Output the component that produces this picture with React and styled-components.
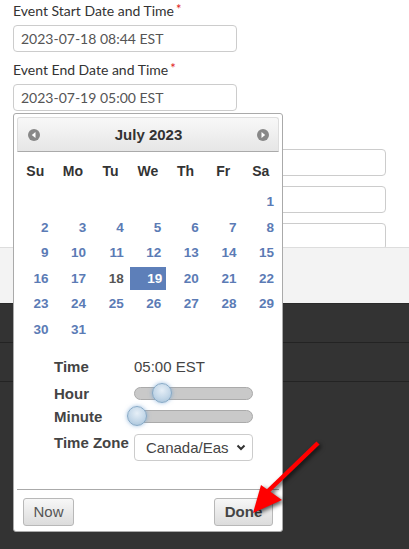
import React from "react";
import styled, { createGlobalStyle } from "styled-components";

const Global = createGlobalStyle`
  html, body { margin: 0; padding: 0; background: #333; }
  body { width: 409px; height: 549px; overflow: hidden; font-family: "Liberation Sans", Arial, sans-serif; }
`;

const Page = styled.div`
  position: relative;
  width: 409px;
  height: 549px;
  background: #333;
`;

const FormArea = styled.div`
  height: 247px;
  background: #fff;
  overflow: hidden;
  display: flex;
  gap: 14px;
  padding-left: 13px;
  box-sizing: border-box;
`;

const LeftCol = styled.div`
  width: 224px;
  display: flex;
  flex-direction: column;
`;

const RightCol = styled.div`
  width: 135px;
  padding-top: 149px;
  display: flex;
  flex-direction: column;
  gap: 10px;
`;

const Field = styled.div`
  margin-top: ${(p) => p.$mt}px;
  display: flex;
  flex-direction: column;
`;

const Label = styled.div`
  font-family: Lato, "Liberation Sans", sans-serif;
  font-size: 14px;
  line-height: 20px;
  color: #333;
  margin-bottom: 4px;
  white-space: nowrap;
`;

const Req = styled.span`
  color: #e02020;
  font-size: 13px;
  margin-left: 2px;
  position: relative;
  top: -2px;
`;

const TextInput = styled.div`
  height: 27px;
  flex: none;
  box-sizing: border-box;
  border: 1px solid #ccc;
  border-radius: 4px;
  padding: 0 7px;
  display: flex;
  align-items: center;
  font-family: Lato, "Liberation Sans", sans-serif;
  font-size: 14px;
  color: #555;
  background: #fff;
`;

const Band = styled.div`
  height: 57px;
  background: #f3f3f3;
  border-top: 1px solid #ddd;
  border-bottom: 1px solid #2a2a2a;
  box-sizing: border-box;
`;

const DarkRow = styled.div`
  height: 39px;
  border-bottom: 1px solid #232323;
  box-sizing: border-box;
  background: #333;
`;

const Popup = styled.div`
  position: absolute;
  left: 13px;
  top: 113px;
  width: 270px;
  box-sizing: border-box;
  background: #fff;
  border: 1px solid #aaa;
  border-radius: 3px;
  padding: 3px 3px 5px;
  font-family: "Liberation Sans", Arial, sans-serif;
`;

const Header = styled.div`
  height: 35px;
  box-sizing: border-box;
  border: 1px solid #ddd;
  border-bottom-color: #aaa;
  border-radius: 3px 3px 0 0;
  background: linear-gradient(#f8f8f8, #e6e6e6);
  display: flex;
  align-items: center;
  justify-content: space-between;
  padding: 0 9px 0 10px;
`;

const Title = styled.div`
  font-weight: bold;
  font-size: 15px;
  color: #333;
`;

const NavIcon = ({ dir }) => (
  <svg width="12" height="12" viewBox="0 0 12 12">
    <circle cx="6" cy="6" r="6" fill="#888" />
    {dir === "prev" ? (
      <polygon points="7.5,3 3.8,6 7.5,9" fill="#fff" />
    ) : (
      <polygon points="4.5,3 8.2,6 4.5,9" fill="#fff" />
    )}
  </svg>
);

const Weekdays = styled.div`
  margin-top: 6px;
  height: 26px;
  display: grid;
  grid-template-columns: repeat(7, 1fr);
  column-gap: 1px;
  align-items: center;
`;

const Weekday = styled.div`
  text-align: center;
  font-weight: bold;
  font-size: 14px;
  color: #333;
`;

const Days = styled.div`
  margin-top: 6px;
  display: grid;
  grid-template-columns: repeat(7, 1fr);
  grid-auto-rows: 23px;
  column-gap: 1px;
  row-gap: 2.5px;
`;

const Day = styled.div`
  display: flex;
  align-items: center;
  justify-content: flex-end;
  padding-right: ${(p) => (p.$sel ? 4 : 5)}px;
  font-weight: bold;
  font-size: 13.5px;
  color: ${(p) => (p.$sel ? "#fff" : p.$today ? "#555" : "#5b7bb5")};
  background: ${(p) => (p.$sel ? "#5d7fb9" : "transparent")};
`;

const TimeBlock = styled.div`
  margin-left: 37px;
  width: 199px;
  display: flex;
  flex-direction: column;
`;

const TRow = styled.div`
  margin-top: ${(p) => p.$mt}px;
  height: ${(p) => p.$h}px;
  display: flex;
  align-items: ${(p) => (p.$top ? "flex-start" : "center")};
`;

const TLabel = styled.div`
  width: 80px;
  flex: none;
  font-weight: bold;
  font-size: 15px;
  line-height: 18px;
  color: #444;
  white-space: nowrap;
`;

const TValue = styled.div`
  font-size: 15px;
  color: #444;
`;

const Track = styled.div`
  position: relative;
  width: 119px;
  height: 13px;
  box-sizing: border-box;
  background: #c9c9c9;
  border: 1px solid #aaa;
  border-radius: 7px;
`;

const Thumb = styled.div`
  position: absolute;
  top: -5px;
  width: 20px;
  height: 20px;
  box-sizing: border-box;
  border-radius: 50%;
  border: 1px solid #86a9c6;
  background: radial-gradient(circle at 50% 35%, #e6eff7 0%, #c3d7e8 55%, #9fbdd6 100%);
  box-shadow: 0 0 4px rgba(110, 160, 210, 0.7);
`;

const Select = styled.div`
  width: 119px;
  height: 27px;
  box-sizing: border-box;
  border: 1px solid #ccc;
  border-radius: 4px;
  display: flex;
  align-items: center;
  justify-content: space-between;
  padding: 0 6px 0 11px;
  font-size: 15px;
  color: #444;
`;

const SelectText = styled.span`
  white-space: nowrap;
`;

const Footer = styled.div`
  margin-top: 28px;
  border-top: 1px solid #aaa;
  padding: 8px 6px 0;
  display: flex;
  justify-content: space-between;
`;

const Button = styled.div`
  height: 28px;
  box-sizing: border-box;
  width: ${(p) => p.$w}px;
  display: flex;
  align-items: center;
  justify-content: center;
  border: 1px solid #b8b8b8;
  border-radius: 3px;
  background: linear-gradient(#f7f7f7, #dcdcdc);
  font-size: 15px;
  font-weight: ${(p) => (p.$bold ? "bold" : "normal")};
  color: ${(p) => (p.$bold ? "#444" : "#555")};
`;

const Arrow = styled.svg`
  position: absolute;
  left: 240px;
  top: 430px;
  overflow: visible;
  filter: drop-shadow(2px 2px 2px rgba(0, 0, 0, 0.65));
`;

const weekdays = ["Su", "Mo", "Tu", "We", "Th", "Fr", "Sa"];

export default function App() {
  const cells = [];
  for (let i = 0; i < 6; i++) cells.push(null);
  for (let d = 1; d <= 31; d++) cells.push(d);

  return (
    <Page>
      <Global />
      <FormArea>
        <LeftCol>
          <Field $mt={1}>
            <Label>
              Event Start Date and Time<Req>*</Req>
            </Label>
            <TextInput>2023-07-18 08:44 EST</TextInput>
          </Field>
          <Field $mt={8}>
            <Label>
              Event End Date and Time<Req>*</Req>
            </Label>
            <TextInput>2023-07-19 05:00 EST</TextInput>
          </Field>
        </LeftCol>
        <RightCol>
          <TextInput />
          <TextInput />
          <TextInput />
        </RightCol>
      </FormArea>
      <Band />
      <DarkRow />
      <DarkRow />

      <Popup>
        <Header>
          <NavIcon dir="prev" />
          <Title>July 2023</Title>
          <NavIcon dir="next" />
        </Header>
        <Weekdays>
          {weekdays.map((w) => (
            <Weekday key={w}>{w}</Weekday>
          ))}
        </Weekdays>
        <Days>
          {cells.map((d, i) => (
            <Day key={i} $sel={d === 19} $today={d === 18}>
              {d}
            </Day>
          ))}
        </Days>
        <TimeBlock>
          <TRow $mt={16} $h={20}>
            <TLabel>Time</TLabel>
            <TValue>05:00 EST</TValue>
          </TRow>
          <TRow $mt={7} $h={20}>
            <TLabel>Hour</TLabel>
            <Track>
              <Thumb style={{ left: 17 }} />
            </Track>
          </TRow>
          <TRow $mt={3} $h={20}>
            <TLabel>Minute</TLabel>
            <Track>
              <Thumb style={{ left: -8 }} />
            </Track>
          </TRow>
          <TRow $mt={7} $h={27} $top>
            <TLabel>Time Zone</TLabel>
            <Select>
              <SelectText>Canada/Eas</SelectText>
              <svg width="10" height="10" viewBox="0 0 10 10">
                <polyline points="1.5,3.5 5,7 8.5,3.5" fill="none" stroke="#333" strokeWidth="2" />
              </svg>
            </Select>
          </TRow>
        </TimeBlock>
        <Footer>
          <Button $w={51}>Now</Button>
          <Button $w={59} $bold>
            Done
          </Button>
        </Footer>
      </Popup>

      <Arrow width="100" height="100" viewBox="0 0 100 100">
        <line x1="78" y1="13" x2="24" y2="65" stroke="#ff0000" strokeWidth="4.5" strokeLinecap="butt" />
        <polygon points="13,83 21,55 42,70" fill="#ff0000" />
      </Arrow>
    </Page>
  );
}
